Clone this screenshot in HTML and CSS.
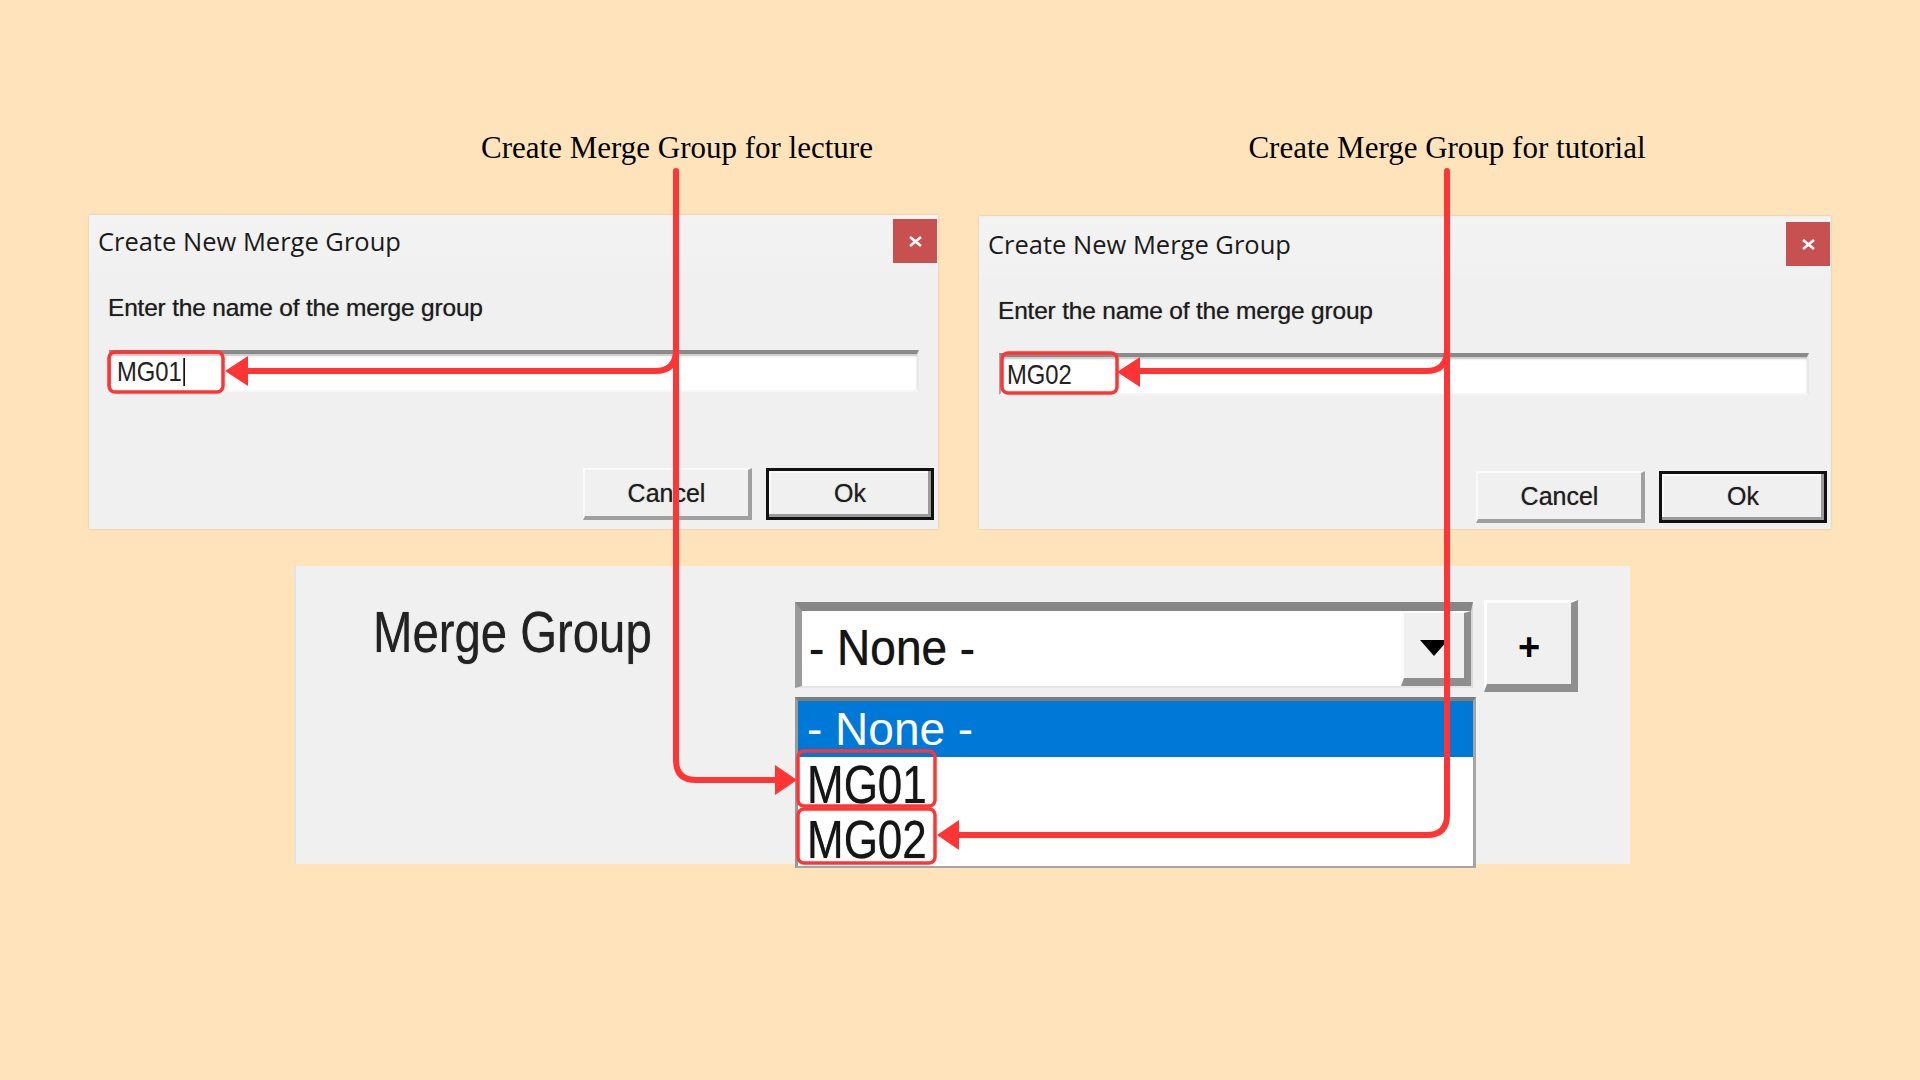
FILE: index.html
```html
<!DOCTYPE html>
<html lang="en">
  <head>
    <meta charset="UTF-8" />
    <meta name="viewport" content="width=device-width, initial-scale=1.0" />
    <title>Merge Group</title>

    <link rel="stylesheet" href="styles.css">
  </head>
  <body>
    <div class="captions">
      <div class="caption">Create Merge Group for lecture</div>
      <div class="caption">Create Merge Group for tutorial</div>
    </div>

    <div class="dialogs">
      <div class="dialog">
        <div class="dialog-title">
          <span class="title-text">Create New Merge Group</span>
          <div class="close">
            <svg width="13" height="11" viewBox="0 0 13 11"><path d="M1 1 L12 10 M12 1 L1 10" stroke="#fff" stroke-width="2.6" /></svg>
          </div>
        </div>
        <div class="dialog-body">
          <div class="prompt">Enter the name of the merge group</div>
          <div class="textbox"><span class="squeeze">MG01<span class="caret"></span></span></div>
          <div class="buttons">
            <div class="btn">Cancel</div>
            <div class="btn btn-default">Ok</div>
          </div>
        </div>
      </div>

      <div class="dialog dialog-second">
        <div class="dialog-title">
          <span class="title-text">Create New Merge Group</span>
          <div class="close">
            <svg width="13" height="11" viewBox="0 0 13 11"><path d="M1 1 L12 10 M12 1 L1 10" stroke="#fff" stroke-width="2.6" /></svg>
          </div>
        </div>
        <div class="dialog-body">
          <div class="prompt">Enter the name of the merge group</div>
          <div class="textbox"><span class="squeeze">MG02</span></div>
          <div class="buttons">
            <div class="btn">Cancel</div>
            <div class="btn btn-default">Ok</div>
          </div>
        </div>
      </div>
    </div>

    <div class="panel">
      <div class="field-label"><span class="squeeze">Merge Group</span></div>
      <div class="combo-col">
        <div class="combo-row">
          <div class="combo">
            <span class="combo-value"><span class="squeeze">- None -</span></span>
            <div class="combo-btn">
              <svg width="28" height="16" viewBox="0 0 28 16"><path d="M0 0 H28 L14 16 Z" fill="#000" /></svg>
            </div>
          </div>
          <div class="plus-btn">+</div>
        </div>
        <div class="list">
          <div class="list-item selected">- None -</div>
          <div class="list-item"><span class="squeeze">MG01</span></div>
          <div class="list-item"><span class="squeeze">MG02</span></div>
        </div>
      </div>
    </div>

    <!-- annotation arrows drawn over the screenshots -->
    <svg class="annotations" width="1920" height="1080" viewBox="0 0 1920 1080">
      <g fill="none" stroke="#ff3535" stroke-width="6" stroke-linecap="round" stroke-linejoin="round">
        <path d="M676 171 V760 Q676 780 696 780 H778" />
        <path d="M676 350 Q676 371 655 371 H244" />
        <path d="M1447 171 V815 Q1447 835 1427 835 H956" />
        <path d="M1447 350 Q1447 371 1426 371 H1137" />
      </g>
      <g fill="#ff3535">
        <polygon points="225,371 248,356 248,386" />
        <polygon points="797,780 775,765 775,795" />
        <polygon points="937,835 959,820 959,850" />
        <polygon points="1117,372 1140,357 1140,387" />
      </g>
      <g fill="none" stroke="#ff3535" stroke-width="3.5">
        <rect x="109" y="352" width="114" height="40" rx="6" />
        <rect x="1002" y="353" width="115" height="40" rx="6" />
        <rect x="798" y="751" width="137" height="55" rx="6" />
        <rect x="798" y="809" width="137" height="54" rx="6" />
      </g>
    </svg>
  </body>
</html>
```

FILE: styles.css
```css
body {
  margin: 0;
  width: 1920px;
  height: 1080px;
  position: relative;
  overflow: hidden;
  background: #ffe4bb;
  font-family: "Liberation Sans", Arial, sans-serif;
}

/* the screenshot text is horizontally squeezed */
.squeeze {
  display: inline-block;
  white-space: nowrap;
  transform-origin: left center;
}

.captions {
  display: flex;
  gap: 370px;
  padding: 128px 0 0 477px;
}

.caption {
  width: 400px;
  text-align: center;
  white-space: nowrap;
  font-family: "Liberation Serif", "Times New Roman", serif;
  font-size: 31px;
  line-height: 40px;
  color: #000;
}

.dialogs {
  display: flex;
  align-items: flex-start;
  gap: 41px;
  margin-top: 47px;
  padding-left: 89px;
}

.dialog {
  width: 849px;
  height: 314px;
  background: #f0f0f0;
  box-shadow: 0 0 2px rgba(0, 0, 0, 0.18);
  display: flex;
  flex-direction: column;
}

.dialog-second {
  width: 852px;
  height: 313px;
  margin-top: 1px;
  padding-top: 2px;
  box-sizing: border-box;
}

.dialog-title {
  height: 57px;
  display: flex;
  align-items: flex-start;
  justify-content: space-between;
  padding: 4px 1px 0 9px;
  box-sizing: border-box;
  background: linear-gradient(#f3f3f3, #f1f1f1);
}

.title-text {
  font-family: "Open Sans", "Noto Sans", sans-serif;
  font-size: 25.5px;
  line-height: 44px;
  color: #1b1b1b;
}

.close {
  width: 44px;
  height: 44px;
  background: #c75050;
  display: flex;
  align-items: center;
  justify-content: center;
}

.dialog-body {
  padding: 21px 4px 0 19px;
  display: flex;
  flex-direction: column;
}

.prompt {
  font-size: 24.5px;
  line-height: 30px;
  letter-spacing: -0.2px;
  color: #1c1c1c;
  text-shadow: 0 0 1px #777;
}

.textbox {
  margin: 27px 0 0 1px;
  width: 810px;
  height: 42px;
  box-sizing: border-box;
  background: #fff;
  border-top: 4px solid #8a8a8a;
  border-left: 2px solid #a5a5a5;
  border-right: 2px solid #e9e9e9;
  border-bottom: 2px solid #f6f6f6;
  box-shadow: inset 0 2px 2px #c8c8c8;
  padding-left: 6px;
  font-size: 28px;
  line-height: 36px;
  color: #222;
  display: flex;
  align-items: center;
}

.textbox .squeeze {
  transform: scaleX(0.85);
}

.caret {
  display: inline-block;
  width: 2px;
  height: 28px;
  margin-left: 2px;
  vertical-align: -5px;
  background: #111;
}

.buttons {
  display: flex;
  justify-content: flex-end;
  gap: 14px;
  margin-top: 76px;
}

.btn {
  width: 169px;
  height: 52px;
  box-sizing: border-box;
  background: #f0f0f0;
  border-top: 2px solid #fafafa;
  border-left: 2px solid #fafafa;
  border-right: 4px solid #a0a0a0;
  border-bottom: 4px solid #a0a0a0;
  font-size: 25px;
  line-height: 46px;
  text-align: center;
  color: #1e1e1e;
  text-shadow: 0 0 1px #777;
}

.btn-default {
  width: 168px;
  border: 3px solid #111;
  box-shadow: inset -3px -3px 0 #9a9a9a, inset 2px 2px 0 #fafafa;
  line-height: 44px;
}

.panel {
  width: 1336px;
  height: 298px;
  margin: 37px 0 0 294px;
  box-sizing: border-box;
  background: #f0f0f0;
  border-left: 2px solid #e2e2e2;
  display: flex;
  align-items: flex-start;
}

.field-label {
  width: 499px;
  padding-left: 77px;
  margin-top: 38px;
  box-sizing: border-box;
  flex: none;
  font-size: 57px;
  line-height: 57px;
  color: #222;
  text-shadow: 0 0 1px #555;
}

.field-label .squeeze {
  transform: scaleX(0.83);
}

.combo-col {
  margin-top: 36px;
  width: 681px;
  display: flex;
  flex-direction: column;
}

.combo-row {
  display: flex;
  align-items: flex-start;
  gap: 11px;
}

.combo {
  flex: none;
  width: 678px;
  height: 86px;
  box-sizing: border-box;
  background: #fff;
  border-top: 9px solid #868686;
  border-left: 7px solid #9b9b9b;
  border-right: 2px solid #d8d8d8;
  border-bottom: 2px solid #e6e6e6;
  display: flex;
  align-items: stretch;
  justify-content: space-between;
}

.combo-value {
  padding-left: 7px;
  font-size: 50px;
  line-height: 75px;
  color: #151515;
  text-shadow: 0 0 1px #444;
}

.combo-value .squeeze {
  transform: scaleX(0.92);
}

.combo-btn {
  width: 70px;
  box-sizing: border-box;
  background: #f0f0f0;
  border-top: 2px solid #fbfbfb;
  border-left: 3px solid #fbfbfb;
  border-right: 7px solid #8e8e8e;
  border-bottom: 8px solid #8e8e8e;
  display: flex;
  align-items: center;
  justify-content: center;
  padding-top: 4px;
}

.plus-btn {
  flex: none;
  width: 94px;
  height: 92px;
  margin-top: -2px;
  box-sizing: border-box;
  background: #f0f0f0;
  border-top: 3px solid #fcfcfc;
  border-left: 3px solid #fcfcfc;
  border-right: 7px solid #8f8f8f;
  border-bottom: 8px solid #8f8f8f;
  font-size: 38px;
  font-weight: bold;
  line-height: 88px;
  text-align: center;
  color: #000;
}

.list {
  margin-top: 5px;
  width: 681px;
  height: 171px;
  box-sizing: border-box;
  background: #fff;
  border-top: 4px solid #7d7d7d;
  border-left: 3px solid #9a9a9a;
  border-right: 3px solid #a5a5a5;
  border-bottom: 2px solid #a5a5a5;
}

.list-item {
  height: 55px;
  padding-left: 9px;
  font-size: 53px;
  line-height: 55px;
  color: #151515;
  text-shadow: 0 0 1px #444;
}

.list-item .squeeze {
  transform: scaleX(0.83);
}

.list-item.selected {
  height: 56px;
  font-size: 46px;
  line-height: 56px;
  background: #0078d7;
  color: #fff;
  text-shadow: none;
}

.annotations {
  position: absolute;
  top: 0;
  left: 0;
  pointer-events: none;
}
```
